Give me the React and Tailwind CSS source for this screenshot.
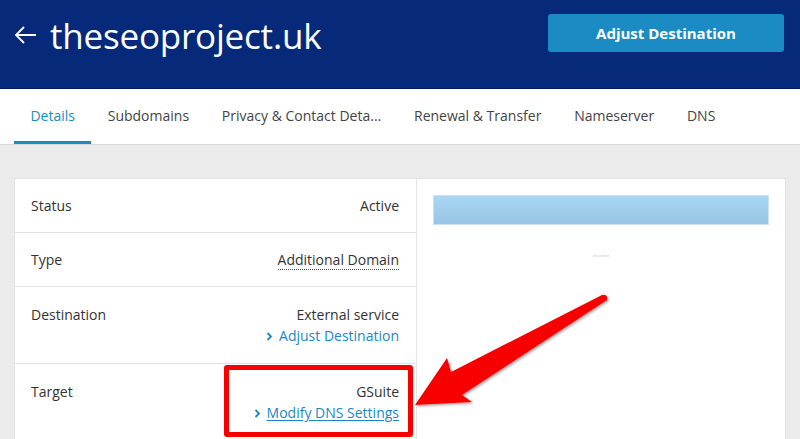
import React from "react";

const font = { fontFamily: '"Open Sans", "Noto Sans", Arial, sans-serif' };

function Chevron() {
  return (
    <svg width="7" height="9" viewBox="0 0 7 9" className="inline-block mr-[6px] mb-[2px]">
      <path d="M1.5 1 L5 4.5 L1.5 8" fill="none" stroke="currentColor" strokeWidth="1.8" />
    </svg>
  );
}

function Row({ label, children, last, tall }) {
  return (
    <div
      className={`flex justify-between pl-4 pr-[17px] ${tall ? "pt-[17px] pb-[17px]" : "py-4"} ${last ? "" : "border-b border-[#e3e3e3]"}`}
    >
      <div className="text-[14px] leading-[21px] text-[#333]">{label}</div>
      <div className="text-right text-[14px] leading-[21px] text-[#333]">{children}</div>
    </div>
  );
}

export default function App() {
  const tabs = ["Details", "Subdomains", "Privacy & Contact Deta...", "Renewal & Transfer", "Nameserver", "DNS"];
  return (
    <div className="w-[800px] h-[439px] overflow-hidden bg-[#ebebeb] relative" style={font}>
      {/* page header */}
      <div className="h-[89px] bg-[#062a79] border-b border-[#031d5e] flex items-start justify-between pl-[13px] pr-4">
        <div className="flex items-center h-[70px] gap-[12px]">
          <svg width="25" height="20" viewBox="0 0 25 20">
            <path d="M23 10 H3 M11 2 L3 10 L11 18" fill="none" stroke="white" strokeWidth="1.8" />
          </svg>
          <span className="text-white text-[35px] font-medium tracking-[-0.2px] leading-none">theseoproject.uk</span>
        </div>
        <button className="mt-[14px] w-[236px] h-[38px] rounded-[3px] bg-[#1a8bc3] text-white text-[15px] font-bold">
          Adjust Destination
        </button>
      </div>

      {/* tab bar */}
      <div className="h-[56px] bg-white border-b border-[#d9d9d9] flex pl-[14px]">
        {tabs.map((t, i) => (
          <div
            key={t}
            className={`px-[16.4px] flex items-center text-[14px] ${i === 0 ? "text-[#1a8bc3] border-b-[3px] border-[#1a8bc3] pt-[1px]" : "text-[#444] pb-[2px]"}`}
          >
            {t}
          </div>
        ))}
      </div>

      {/* details card */}
      <div className="mx-[14px] mt-[33px] bg-white border border-[#e2e2e2] flex">
        <div className="w-[402px] border-r border-[#e6e6e6]">
          <Row label="Status">Active</Row>
          <Row label="Type">
            <span className="border-b border-dotted border-[#555]">Additional Domain</span>
          </Row>
          <Row label="Destination" tall>
            <div>External service</div>
            <div className="text-[#1a88c4]">
              <Chevron />
              Adjust Destination
            </div>
          </Row>
          <Row label="Target" last tall>
            <div>GSuite</div>
            <div className="text-[#1a88c4] underline underline-offset-2">
              <Chevron />
              Modify DNS Settings
            </div>
          </Row>
        </div>
        <div className="flex-1 px-4 pt-[16px]">
          <div className="h-[30px] bg-gradient-to-b from-[#a9d6f2] to-[#97c5e4] border border-[#c8e4f6]" />
          <div className="mt-[29px] text-center text-[3px] text-[#bbb]">Screenshot</div>
        </div>
      </div>

      {/* annotation: red box and arrow */}
      <div className="absolute left-[224px] top-[365px] w-[189px] h-[72px] border-[5px] border-[#f90000] rounded-[3px]" />
      <svg className="absolute left-0 top-0" width="800" height="439" viewBox="0 0 800 439">
        <defs>
          <filter id="sh" x="-10%" y="-10%" width="130%" height="130%">
            <feDropShadow dx="1.5" dy="1.5" stdDeviation="1.2" floodColor="#000" floodOpacity="0.35" />
          </filter>
        </defs>
        <path
          d="M415 405 L447 358 L451 372 L602 295 Q608 294 607 300 L462 395 L472 402 Z"
          fill="#f90000"
          filter="url(#sh)"
        />
      </svg>
    </div>
  );
}
